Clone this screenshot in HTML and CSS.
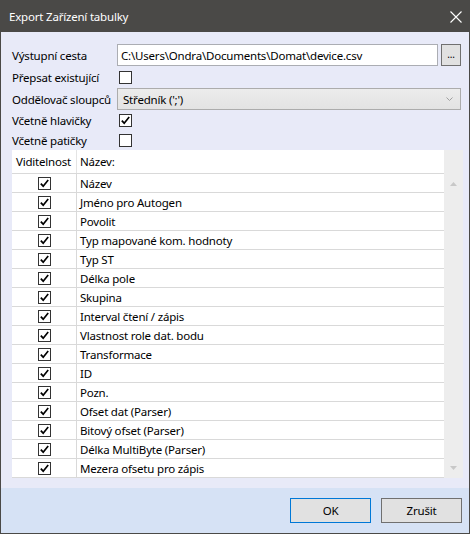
FILE: index.html
```html
<!DOCTYPE html>
<html lang="cs">
<head>
<meta charset="utf-8">
<title>Export Zařízení tabulky</title>
<link rel="stylesheet" href="styles.css">
</head>
<body>
<div class="window">
  <div class="titlebar">
    <span class="title">Export Zařízení tabulky</span>
    <svg class="close" width="12" height="12" viewBox="0 0 12 12"><path d="M0.5 0.5 L11.5 11.5 M11.5 0.5 L0.5 11.5" stroke="#fff" stroke-width="1.1" fill="none"/></svg>
  </div>
  <div class="content">
    <div class="form">
      <div class="label">Výstupní cesta</div>
      <div class="control pathrow">
        <div class="input">C:\Users\Ondra\Documents\Domat\device.csv</div>
        <div class="browse">...</div>
      </div>
      <div class="label">Přepsat existující</div>
      <div class="control"><span class="cb"></span></div>
      <div class="label">Oddělovač sloupců</div>
      <div class="control">
        <div class="combo"><span>Středník (';')</span>
          <svg width="7" height="4" viewBox="0 0 7 4"><path d="M0.5 0.5 L3.5 3.5 L6.5 0.5" stroke="#a0a0a0" fill="none"/></svg>
        </div>
      </div>
      <div class="label">Včetně hlavičky</div>
      <div class="control"><span class="cb on"><svg width="11" height="11" viewBox="0 0 11 11"><path d="M1.8 5.6 L4.2 8.2 L9.2 2" stroke="#000" stroke-width="1.7" fill="none"/></svg></span></div>
      <div class="label">Včetně patičky</div>
      <div class="control"><span class="cb"></span></div>
    </div>
    <div class="grid">
      <div class="rows">
        <div class="row head"><div class="c1">Viditelnost</div><div class="c2">Název:</div></div>
        <div class="row"><div class="c1"><span class="cb on"><svg width="11" height="11" viewBox="0 0 11 11"><path d="M1.8 5.6 L4.2 8.2 L9.2 2" stroke="#000" stroke-width="1.7" fill="none"/></svg></span></div><div class="c2">Název</div></div>
        <div class="row"><div class="c1"><span class="cb on"><svg width="11" height="11" viewBox="0 0 11 11"><path d="M1.8 5.6 L4.2 8.2 L9.2 2" stroke="#000" stroke-width="1.7" fill="none"/></svg></span></div><div class="c2">Jméno pro Autogen</div></div>
        <div class="row"><div class="c1"><span class="cb on"><svg width="11" height="11" viewBox="0 0 11 11"><path d="M1.8 5.6 L4.2 8.2 L9.2 2" stroke="#000" stroke-width="1.7" fill="none"/></svg></span></div><div class="c2">Povolit</div></div>
        <div class="row"><div class="c1"><span class="cb on"><svg width="11" height="11" viewBox="0 0 11 11"><path d="M1.8 5.6 L4.2 8.2 L9.2 2" stroke="#000" stroke-width="1.7" fill="none"/></svg></span></div><div class="c2">Typ mapované kom. hodnoty</div></div>
        <div class="row"><div class="c1"><span class="cb on"><svg width="11" height="11" viewBox="0 0 11 11"><path d="M1.8 5.6 L4.2 8.2 L9.2 2" stroke="#000" stroke-width="1.7" fill="none"/></svg></span></div><div class="c2">Typ ST</div></div>
        <div class="row"><div class="c1"><span class="cb on"><svg width="11" height="11" viewBox="0 0 11 11"><path d="M1.8 5.6 L4.2 8.2 L9.2 2" stroke="#000" stroke-width="1.7" fill="none"/></svg></span></div><div class="c2">Délka pole</div></div>
        <div class="row"><div class="c1"><span class="cb on"><svg width="11" height="11" viewBox="0 0 11 11"><path d="M1.8 5.6 L4.2 8.2 L9.2 2" stroke="#000" stroke-width="1.7" fill="none"/></svg></span></div><div class="c2">Skupina</div></div>
        <div class="row"><div class="c1"><span class="cb on"><svg width="11" height="11" viewBox="0 0 11 11"><path d="M1.8 5.6 L4.2 8.2 L9.2 2" stroke="#000" stroke-width="1.7" fill="none"/></svg></span></div><div class="c2">Interval čtení / zápis</div></div>
        <div class="row"><div class="c1"><span class="cb on"><svg width="11" height="11" viewBox="0 0 11 11"><path d="M1.8 5.6 L4.2 8.2 L9.2 2" stroke="#000" stroke-width="1.7" fill="none"/></svg></span></div><div class="c2">Vlastnost role dat. bodu</div></div>
        <div class="row"><div class="c1"><span class="cb on"><svg width="11" height="11" viewBox="0 0 11 11"><path d="M1.8 5.6 L4.2 8.2 L9.2 2" stroke="#000" stroke-width="1.7" fill="none"/></svg></span></div><div class="c2">Transformace</div></div>
        <div class="row"><div class="c1"><span class="cb on"><svg width="11" height="11" viewBox="0 0 11 11"><path d="M1.8 5.6 L4.2 8.2 L9.2 2" stroke="#000" stroke-width="1.7" fill="none"/></svg></span></div><div class="c2">ID</div></div>
        <div class="row"><div class="c1"><span class="cb on"><svg width="11" height="11" viewBox="0 0 11 11"><path d="M1.8 5.6 L4.2 8.2 L9.2 2" stroke="#000" stroke-width="1.7" fill="none"/></svg></span></div><div class="c2">Pozn.</div></div>
        <div class="row"><div class="c1"><span class="cb on"><svg width="11" height="11" viewBox="0 0 11 11"><path d="M1.8 5.6 L4.2 8.2 L9.2 2" stroke="#000" stroke-width="1.7" fill="none"/></svg></span></div><div class="c2">Ofset dat (Parser)</div></div>
        <div class="row"><div class="c1"><span class="cb on"><svg width="11" height="11" viewBox="0 0 11 11"><path d="M1.8 5.6 L4.2 8.2 L9.2 2" stroke="#000" stroke-width="1.7" fill="none"/></svg></span></div><div class="c2">Bitový ofset (Parser)</div></div>
        <div class="row"><div class="c1"><span class="cb on"><svg width="11" height="11" viewBox="0 0 11 11"><path d="M1.8 5.6 L4.2 8.2 L9.2 2" stroke="#000" stroke-width="1.7" fill="none"/></svg></span></div><div class="c2">Délka MultiByte (Parser)</div></div>
        <div class="row"><div class="c1"><span class="cb on"><svg width="11" height="11" viewBox="0 0 11 11"><path d="M1.8 5.6 L4.2 8.2 L9.2 2" stroke="#000" stroke-width="1.7" fill="none"/></svg></span></div><div class="c2">Mezera ofsetu pro zápis</div></div>
      </div>
      <div class="scrollbar">
        <svg width="7" height="4" viewBox="0 0 7 4"><path d="M0 4 L3.5 0 L7 4 Z" fill="#c8c8c8"/></svg>
        <svg width="7" height="4" viewBox="0 0 7 4"><path d="M0 0 L3.5 4 L7 0 Z" fill="#c8c8c8"/></svg>
      </div>
    </div>
  </div>
  <div class="footer">
    <div class="btn ok">OK</div>
    <div class="btn">Zrušit</div>
  </div>
</div>
</body>
</html>
```

FILE: styles.css
```css
* { box-sizing: border-box; }
html, body { margin: 0; padding: 0; }
body {
  font-family: "Noto Sans", "Open Sans", sans-serif;
  font-size: 11.5px;
  letter-spacing: -0.2px;
  color: #000;
  background: #fff;
}
.window {
  width: 470px;
  height: 534px;
  border: 1px solid #4a4947;
  border-top: 0;
  display: flex;
  flex-direction: column;
  background: #e8eaf8;
}
.titlebar {
  height: 32px;
  margin: 0 -1px;
  background: #4a4947;
  color: #fff;
  display: flex;
  align-items: center;
  justify-content: space-between;
  padding: 0 8px 0 9px;
}
.title { font-size: 11.5px; }
.close { margin-right: 0; margin-top: 1px; }
.content {
  flex: 1;
  padding: 12px 7px 0 10px;
}
.form {
  display: grid;
  grid-template-columns: 106px 344px;
  grid-template-rows: 22px 22px 22px 21px 19px;
}
.label {
  padding-left: 1px;
  display: flex;
  align-items: center;
  white-space: nowrap;
}
.control {
  display: flex;
  align-items: center;
}
.pathrow { gap: 3px; }
.input {
  width: 321px;
  height: 22px;
  background: #fff;
  border: 1px solid #abadb3;
  padding: 0 3px;
  display: flex;
  align-items: center;
  white-space: nowrap;
  overflow: hidden;
}
.browse {
  width: 20px;
  height: 22px;
  background: #e1e1e1;
  border: 1px solid #707070;
  display: flex;
  align-items: center;
  justify-content: center;
  font-size: 10px;
  line-height: 1;
  padding-bottom: 2px;
}
.combo {
  width: 344px;
  height: 22px;
  background: linear-gradient(#ececec, #e3e3e3);
  border: 1px solid #acacac;
  display: flex;
  align-items: center;
  justify-content: space-between;
  padding: 0 7px 0 5px;
}
.cb {
  width: 13px;
  height: 13px;
  border: 1px solid #333;
  background: #fff;
  display: inline-flex;
  align-items: center;
  justify-content: center;
  margin-left: 2px;
}
.cb svg { display: block; }
.grid {
  margin-top: 0;
  margin-left: 1px;
  width: 451px;
  height: 328px;
  display: flex;
}
.rows {
  flex: 1;
  background: #fff;
  display: flex;
  flex-direction: column;
}
.row {
  height: 19px;
  display: flex;
  border-bottom: 1px solid #d9d9d9;
}
.row.head { height: 24px; }
.c1 {
  width: 65px;
  border-right: 1px solid #d9d9d9;
  display: flex;
  align-items: center;
  justify-content: center;
}
.head .c1 { justify-content: flex-start; padding-left: 4px; border-right-color: #e4e4e4; }
.row .cb { margin-left: 0; }
.c2 {
  flex: 1;
  display: flex;
  align-items: center;
  padding-left: 3px;
  white-space: nowrap;
}
.scrollbar {
  width: 19px;
  background: #ededed;
  display: flex;
  flex-direction: column;
  align-items: center;
  justify-content: space-between;
  padding: 32px 0 8px;
}
.footer {
  height: 45px;
  background: #d6e2f5;
  display: flex;
  justify-content: flex-end;
  align-items: flex-start;
  gap: 10px;
  padding: 10px 7px 0 0;
}
.btn {
  width: 81px;
  height: 25px;
  background: #e1e1e1;
  border: 1px solid #707070;
  display: flex;
  align-items: center;
  justify-content: center;
}
.btn.ok { border-color: #0078d7; }
```
